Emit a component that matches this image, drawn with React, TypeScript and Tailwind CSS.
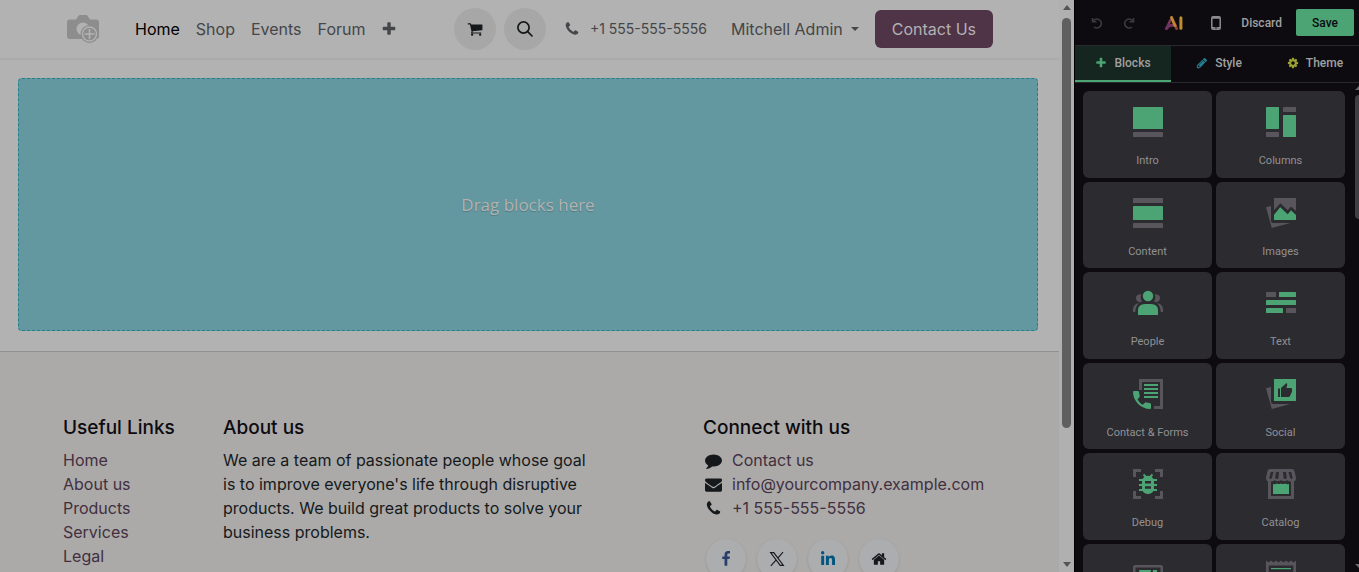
import * as React from "react";
import { FaLinkedinIn } from "react-icons/fa6";

const PATHS = {
  plus: "M1600 736v192q0 40-28 68t-68 28h-416v416q0 40-28 68t-68 28h-192q-40 0-68-28t-28-68v-416h-416q-40 0-68-28t-28-68v-192q0-40 28-68t68-28h416v-416q0-40 28-68t68-28h192q40 0 68 28t28 68v416h416q40 0 68 28t28 68z",
  cart: "M704 1536q0 52-38 90t-90 38-90-38-38-90 38-90 90-38 90 38 38 90zm896 0q0 52-38 90t-90 38-90-38-38-90 38-90 90-38 90 38 38 90zm128-1088v512q0 24-16.5 42.5t-40.5 21.5l-1044 122q13 60 13 70 0 16-24 64h920q26 0 45 19t19 45-19 45-45 19h-1024q-26 0-45-19t-19-45q0-11 8-31.5t16-36 21.5-40 15.5-29.5l-177-823h-204q-26 0-45-19t-19-45 19-45 45-19h256q16 0 28.5 6.5t19.5 15.5 13 24.5 8 26 5.5 29.5 4.5 26h1201q26 0 45 19t19 45z",
  phone: "M1600 1240q0 27-10 70.5t-21 68.5q-21 50-122 106-94 51-186 51-27 0-53-3.5t-57-12.5-47-14.5-55.5-20.5-49.5-18q-98-35-175-83-127-79-264-216t-216-264q-48-77-83-175-3-9-18-49.5t-20.5-55.5-14.5-47-12.5-57-3.5-53q0-92 51-186 56-101 106-122 25-11 68.5-21t70.5-10q14 0 21 3 18 6 53 76 11 19 30 54t35 63.5 31 53.5q3 4 17.5 25t21.5 35.5 7 28.5q0 20-28.5 50t-62 55-62 53-28.5 46q0 9 5 22.5t8.500 20.5 14 24 11.5 19q76 137 174 235t235 174q2 1 19 11.5t24 14 20.5 8.5 22.5 5q18 0 46-28.5t53-62 55-62 50-28.5q14 0 28.5 7t35.5 21.5 25 17.5q25 15 53.5 31t63.5 35 54 30q70 35 76 53 3 7 3 21z",
  comment: "M1792 896q0 174-120 321.5t-326 233-450 85.5q-70 0-145-8-198 175-460 242-49 14-114 22h-5q-15 0-27-10.5t-16-27.5v-1q-3-4-.5-12t2-10 4.5-9.5l6-9 7-8.5 8-9q7-8 31-34.5t34.5-38 31-39.5 32.5-51 27-59 26-76q-157-89-247.5-220t-90.5-281q0-130 71-248.5t191-204.5 286-136.5 348-50.5 348 50.5 286 136.5 191 204.5 71 248.5z",
  envelope: "M1792 710v794q0 66-47 113t-113 47h-1472q-66 0-113-47t-47-113v-794q44 49 101 87 362 246 497 345 57 42 92.5 65.5t94.5 48 110 24.5h2q51 0 110-24.5t94.5-48 92.5-65.5q170-123 498-345 57-39 100-87zm0-294q0 79-49 151t-122 123q-376 261-468 325-10 7-42.5 31t-54 38.5-52 32.5-57.5 27-50 9h-2q-23 0-50-9t-57.5-27-52-32.5-54-38.5-42.5-31q-91-64-262-182.5t-205-142.5q-62-42-117-115.5t-55-136.5q0-78 41.5-130t118.5-52h1472q65 0 112.5 47t47.5 113z",
  facebook: "M1343 12v264h-157q-86 0-116 36t-30 108v189h293l-39 296h-254v759h-306v-759h-255v-296h255v-218q0-186 104-288.5t277-102.5q147 0 228 12z",
  home: "M1472 992v480q0 26-19 45t-45 19h-384v-384h-256v384h-384q-26 0-45-19t-19-45v-480q0-1 .5-3t.5-3l575-474 575 474q1 2 1 6zm223-69l-62 74q-8 9-21 11h-3q-13 0-21-7l-692-577-692 577q-12 8-24 7-13-2-21-11l-62-74q-8-10-7-23.5t11-21.5l719-599q32-26 76-26t76 26l244 204v-195q0-14 9-23t23-9h192q14 0 23 9t9 23v408l219 182q10 8 11 21.5t-7 23.5z",
  pencil: "M491 1536l91-91-235-235-91 91v107h128v128h107zm523-928q0-22-22-22-10 0-17 7l-542 542q-7 7-7 17 0 22 22 22 10 0 17-7l542-542q7-7 7-17zm-54-192l416 416-832 832h-416v-416zm683 96q0 53-37 90l-166 166-416-416 166-165q36-38 90-38 53 0 91 38l235 234q37 39 37 91z",
  cog: "M1152 896q0-106-75-181t-181-75-181 75-75 181 75 181 181 75 181-75 75-181zm512-109v222q0 12-8 23t-20 13l-185 28q-19 54-39 91 35 50 107 138 10 12 10 25t-9 23q-27 37-99 108t-94 71q-12 0-26-9l-138-108q-44 23-91 38-16 136-29 186-7 28-36 28h-222q-14 0-24.5-8.5t-11.5-21.5l-28-184q-49-16-90-37l-141 107q-10 9-25 9-14 0-25-11-126-114-165-168-7-10-7-23 0-12 8-23 15-21 51-66.5t54-70.5q-27-50-41-99l-183-27q-13-2-21-12.5t-8-23.5v-222q0-12 8-23t19-13l186-28q14-46 39-92-40-57-107-138-10-12-10-24 0-10 9-23 26-36 98.5-107.5t94.5-71.5q13 0 26 10l138 107q44-23 91-38 16-136 29-186 7-28 36-28h222q14 0 24.5 8.5t11.5 21.5l28 184q49 16 90 37l142-107q9-9 24-9 13 0 25 10 129 119 165 170 7 8 7 22 0 12-8 23-15 21-51 66.5t-54 70.5q26 50 41 98l183 28q13 2 21 12.5t8 23.5z",
};

function Icon({ name, className }: { name: keyof typeof PATHS; className?: string }) {
  return (
    <svg viewBox="0 0 1792 1792" fill="currentColor" className={className} aria-hidden="true">
      <path d={PATHS[name]} />
    </svg>
  );
}

const GREEN = "#4ca374";
const GRAY = "#58565c";

const navLinks = ["Shop", "Events", "Forum"];
const footerLinks = ["Home", "About us", "Products", "Services", "Legal"];

const blocks: { label?: string; art: React.ReactNode }[] = [
  {
    label: "Intro",
    art: (
      <>
        <rect width="30" height="22" rx="0.5" fill={GREEN} />
        <rect y="25" width="30" height="5" rx="0.5" fill={GRAY} />
      </>
    ),
  },
  {
    label: "Columns",
    art: (
      <>
        <rect width="13" height="22" rx="0.5" fill={GREEN} />
        <rect y="25" width="13" height="5" rx="0.5" fill={GRAY} />
        <rect x="17" width="13" height="5" rx="0.5" fill={GRAY} />
        <rect x="17" y="8" width="13" height="22" rx="0.5" fill={GREEN} />
      </>
    ),
  },
  {
    label: "Content",
    art: (
      <>
        <rect width="30" height="5" rx="0.5" fill={GRAY} />
        <rect y="8" width="30" height="14" rx="0.5" fill={GREEN} />
        <rect y="25" width="30" height="5" rx="0.5" fill={GRAY} />
      </>
    ),
  },
  {
    label: "Images",
    art: (
      <>
        <path fill={GRAY} d="M8 0h22v13l-5-4.6-3.3 3.8-7.3-7L8 12.3z" />
        <path fill={GRAY} d="M0 9.3 5 8v14.5q0 2.5 2.5 2.5h16.8L5.8 30z" />
        <path fill={GREEN} d="m8 16.8 6.2-7.5 7.5 7 3.3-4L30 17v5H8z" />
      </>
    ),
  },
  {
    label: "People",
    art: (
      <>
        <circle cx="15" cy="8" r="5.2" fill={GREEN} />
        <path fill={GREEN} d="M5 27v-4.5q0-6.5 7-6.5h6q7 0 7 6.5V27z" />
        <g fill={GRAY}>
          <path d="M8.500 6Q3 6.500 3 10.300 3 14 8 14.300 9 13.500 8.800 13 6.500 9.500 8.500 6zM0 24v-3q.5-5 6-6-3.500 3.500-3.800 9z" />
          <path d="M21.500 6q5.500.5 5.500 4.300 0 3.700-5 4-1-.8-.8-1.300 2.300-3.500.3-7zM30 24v-3q-.5-5-6-6 3.500 3.500 3.800 9z" />
        </g>
      </>
    ),
  },
  {
    label: "Text",
    art: (
      <>
        <rect y="4" width="10" height="5" rx="0.5" fill={GRAY} />
        <rect x="13" y="4" width="17" height="5" rx="0.5" fill={GREEN} />
        <rect y="12" width="30" height="5" rx="0.5" fill={GREEN} />
        <rect y="20" width="17" height="5" rx="0.5" fill={GREEN} />
        <rect x="20" y="20" width="10" height="5" rx="0.5" fill={GRAY} />
      </>
    ),
  },
  {
    label: "Contact & Forms",
    art: (
      <>
        <path d="M7.500 11V1.500h21v27H21" fill="none" stroke={GRAY} strokeWidth="3" />
        <path fill={GREEN} d="M11 5h14v2H11zM11 9h14v2H11zM11 13h14v2H11zM11 17h14v2H11z" />
        <path fill={GREEN} d="M0 13q0-1 1-1h4l1 .7.8 4.800-2.300 3q2 3.500 5.200 5.200l2.800-2.400 4.800 1 .7.700v4q0 1-1 1C8 30 0 22 0 13z" />
      </>
    ),
  },
  {
    label: "Social",
    art: (
      <>
        <path fill={GRAY} d="M0 9.300 5 8v14.500q0 2.500 2.500 2.500h16.800L5.800 30z" />
        <path
          fill={GREEN}
          fillRule="evenodd"
          d="M8 0h22v22H8zM12 9.500V18h2V9.500zM15 9v9h7.500q1 0 1.500-1l2-4.500V10q0-1-1-1h-4.500l.8-4-.8-1z"
        />
      </>
    ),
  },
  {
    label: "Debug",
    art: (
      <>
        <path d="M1.500 8V1.500H8M22 1.500h6.500V8M28.500 22v6.500H22M8 28.500H1.500V22" fill="none" stroke={GRAY} strokeWidth="3" />
        <path d="m10.500 5.500 3 3M19.500 5.500l-3 3" fill="none" stroke={GREEN} strokeWidth="1.8" />
        <path
          fill={GREEN}
          fillRule="evenodd"
          d="M11.500 7.500q3.500-1.500 7 0L20.500 10H24v2h-3v3h3v2h-3v3h3v2h-3.500q-2 3-5.500 3t-5.500-3H6v-2h3v-3H6v-2h3v-3H6v-2h3.500zM12 12v2.500h6V12zM12 17.300v2.500h6v-2.500z"
        />
      </>
    ),
  },
  {
    label: "Catalog",
    art: (
      <>
        <path
          fill={GRAY}
          fillRule="evenodd"
          d="M4 0h22q1.800 0 2.400 1.800L30 8.500Q30 12 28 12.300V30H2V12.300Q0 12 0 8.500L1.600 1.800Q2.200 0 4 0zM5 12.500V27h20V12.500q-2.500 0-3.500-1.300-3.200 2.300-6.500 0-3.300 2.300-6.500 0Q7.500 12.500 5 12.500zM4.800 3 3.300 9q1 1.800 2.600 0L7.500 3zM10 3l-.8 6q1.600 1.800 3.200 0l.6-6zM17 3l.6 6q1.600 1.800 3.200 0L20 3zM22.500 3l1.600 6q1.600 1.800 2.600 0l-1.500-6z"
        />
        <path fill={GREEN} d="M7 15q2 .6 4-.5 2 1.200 4 0 2 1.200 4 0 2 1.100 4 .5v10H7z" />
      </>
    ),
  },
  {
    art: (
      <>
        <rect x="1.250" y="6.250" width="27.500" height="22" rx="1" fill="none" stroke={GRAY} strokeWidth="2.500" />
        <path fill={GREEN} d="M6 10h12l-1.500 8H8zM20 10h4v8h-5z" />
      </>
    ),
  },
  {
    art: (
      <>
        <path fill={GRAY} fillRule="evenodd" d="m0 .5 2.500 2L5 .5l2.500 2 2.500-2 2.500 2 2.500-2 2.500 2 2.500-2 2.500 2 2.500-2 2.500 2 2.500-2V30H0zM2.700 5.500V28h24.600V5.500z" />
        <path fill={GREEN} d="M5 8h20v1.200H5z" />
      </>
    ),
  },
];

function NavBar() {
  return (
    <header className="flex h-[60px] shrink-0 items-center border-b-2 border-[#aaaaaa] pl-[67px] pr-[66px] text-[#444649]">
      <a href="#" aria-label="Logo">
        <svg viewBox="0 0 33 28" className="h-7 w-[33px]" aria-hidden="true">
          <path fill="#8d8d8d" d="M3 4.500h6L11.500.8q.5-.8 1.500-.8h6q1 0 1.500.8L23 4.500h6q3 0 3 3V21q0 3-3 3H3q-3 0-3-3V7.500q0-3 3-3z" />
          <circle cx="16" cy="14" r="6.500" fill="#b2b2b2" />
          <circle cx="22.500" cy="19" r="9" fill="#8d8d8d" />
          <circle cx="22.500" cy="19" r="7" fill="#8d8d8d" stroke="#b2b2b2" strokeWidth="1.400" />
          <path d="M22.500 14v10M17.500 19h10" stroke="#b2b2b2" strokeWidth="1.600" />
        </svg>
      </a>
      <nav className="ml-[35px] flex items-center gap-4">
        <a href="#" className="text-black">Home</a>
        {navLinks.map((link) => (
          <a key={link} href="#">{link}</a>
        ))}
        <button type="button" aria-label="More">
          <Icon name="plus" className="size-4" />
        </button>
      </nav>
      <div className="ml-auto flex items-center">
        <button type="button" aria-label="Cart" className="flex size-[42px] items-center justify-center rounded-full bg-[#a7a7a7] text-[#15191c]">
          <Icon name="cart" className="size-4" />
        </button>
        <button type="button" aria-label="Search" className="ml-2 flex size-[42px] items-center justify-center rounded-full bg-[#a7a7a7] text-[#15191c]">
          <svg viewBox="0 0 16 16" className="size-4" fill="none" stroke="currentColor" strokeWidth="1.700" strokeLinecap="round" aria-hidden="true">
            <circle cx="6.500" cy="6.500" r="5.600" />
            <path d="m10.700 10.700 4.300 4.300" />
          </svg>
        </button>
        <a href="#" className="ml-[18px] flex items-center gap-2.5 text-sm">
          <Icon name="phone" className="size-4" />
          +1 555-555-5556
        </a>
        <button type="button" className="ml-6 flex items-center gap-2">
          Mitchell Admin
          <svg viewBox="0 0 8 4" className="h-1 w-2" fill="currentColor" aria-hidden="true">
            <path d="M0 0h8L4 4z" />
          </svg>
        </button>
        <a href="#" className="ml-4 rounded-md bg-[#4f3347] px-[17px] py-[7px] text-[#b2b2b2]">
          Contact Us
        </a>
      </div>
    </header>
  );
}

function Footer() {
  const heading = "mb-2 text-[19px]/6 font-medium text-[#0d0b10]";
  const circle = "flex size-10 items-center justify-center rounded-full bg-[#acadaf] shadow-sm";
  return (
    <footer className="grid flex-1 grid-cols-[2fr_5fr_1fr_4fr] border-t border-[#8f9193] bg-[#abaaa8] pb-8 pl-[63px] pr-9 pt-16 text-[#15191c]">
      <div>
        <h5 className={heading}>Useful Links</h5>
        <ul className="text-[#422f40]">
          {footerLinks.map((link) => (
            <li key={link}><a href="#">{link}</a></li>
          ))}
        </ul>
      </div>
      <div className="pr-8">
        <h5 className={heading}>About us</h5>
        <p>
          We are a team of passionate people whose goal is to improve everyone's life through disruptive
          products. We build great products to solve your business problems.
        </p>
      </div>
      <div className="col-start-4">
        <h5 className={heading}>Connect with us</h5>
        <ul>
          <li className="flex items-center gap-2">
            <Icon name="comment" className="mx-0.5 size-[17px]" />
            <a href="#" className="text-[#422f40]">Contact us</a>
          </li>
          <li className="flex items-center gap-2">
            <Icon name="envelope" className="mx-0.5 size-[17px]" />
            <a href="#" className="text-[#422f40]">info@yourcompany.example.com</a>
          </li>
          <li className="flex items-center gap-2">
            <Icon name="phone" className="mx-0.5 size-[17px]" />
            <a href="#" className="text-[#422f40]">+1 555-555-5556</a>
          </li>
        </ul>
        <div className="ml-[3px] mt-[19px] flex gap-[11px]">
          <a href="#" aria-label="Facebook" className={circle}><Icon name="facebook" className="size-4 text-[#293d6b]" /></a>
          <a href="#" aria-label="X" className={circle}>
            <svg viewBox="0 0 16 16" className="size-4" fill="none" stroke="currentColor" strokeWidth="1.100" aria-hidden="true">
              <path d="M1.600 1.600h3.200l9.600 12.800h-3.200zM14 1.200 8.800 7.200M7 9.200l-5.200 5.600" />
            </svg>
          </a>
          <a href="#" aria-label="LinkedIn" className={circle}><FaLinkedinIn className="size-4 text-[#005580]" /></a>
          <a href="#" aria-label="Website" className={circle}><Icon name="home" className="size-4" /></a>
        </div>
      </div>
    </footer>
  );
}

function PageScrollbar() {
  return (
    <div className="flex w-[15px] shrink-0 flex-col items-center bg-[#b0b0b0] py-[5px]" aria-hidden="true">
      <svg viewBox="0 0 8 5" className="h-[5px] w-2" fill="#555555"><path d="M0 5h8L4 0z" /></svg>
      <div className="mt-2 h-[410px] w-[9px] rounded-full bg-[#5f5f5f]" />
      <svg viewBox="0 0 8 5" className="mt-auto h-[5px] w-2" fill="#555555"><path d="M0 0h8L4 5z" /></svg>
    </div>
  );
}

function Sidebar() {
  return (
    <aside className="flex w-[285px] shrink-0 flex-col overflow-hidden border-l border-black bg-[#0d0b10] font-[Roboto,sans-serif] text-xs text-[#a0a0a0]">
      <div className="flex h-[46px] shrink-0 items-center border-b border-[#29282d] pl-4 pr-[5px]">
        <button type="button" aria-label="Undo" className="text-[#3b3a40]">
          <svg viewBox="0 0 12 12" className="size-3" fill="none" stroke="currentColor" strokeWidth="1.600" aria-hidden="true">
            <path d="M1.500 1v3.800h4M1.800 4.500A4.500 4.500 0 1 1 3 10" />
          </svg>
        </button>
        <button type="button" aria-label="Redo" className="ml-5 text-[#3b3a40]">
          <svg viewBox="0 0 12 12" className="size-3" fill="none" stroke="currentColor" strokeWidth="1.600" aria-hidden="true">
            <path d="M10.500 1v3.800h-4M10.200 4.500A4.500 4.500 0 1 0 9 10" />
          </svg>
        </button>
        <button type="button" aria-label="AI" className="ml-[30px]">
          <svg viewBox="0 0 18 14" className="h-3.5 w-[18px]" fill="none" strokeLinecap="round" strokeLinejoin="round" aria-hidden="true">
            <path d="M1.500 12.500 5.500 4" stroke="#7a3855" strokeWidth="2.600" />
            <path d="M1.500 12.500Q4 8.500 9.500 9.500" stroke="#6d3260" strokeWidth="3" />
            <path d="m10 9 1.500 3.500" stroke="#8a4030" strokeWidth="3" />
            <path d="m6.500 1.500 3.500 8" stroke="#bf852f" strokeWidth="3" />
            <path d="M15.900 1.700v10.600" stroke="#bf8f2f" strokeWidth="3" />
          </svg>
        </button>
        <button type="button" aria-label="Mobile preview" className="ml-7">
          <svg viewBox="0 0 10 14" className="h-3.5 w-2.5" fill="none" aria-hidden="true">
            <rect x="0.800" y="0.800" width="8.400" height="12.400" rx="1.200" stroke="#8c8c8e" strokeWidth="1.500" />
            <path d="M1 1.800h8M1 11.800h8" stroke="#8c8c8e" strokeWidth="1.800" />
            <circle cx="5" cy="12" r="0.800" fill="#0d0b10" />
          </svg>
        </button>
        <button type="button" className="ml-auto font-medium">Discard</button>
        <button type="button" className="ml-3.5 h-[27px] w-[58px] rounded-xs bg-[#4ca374] font-medium text-[#0d0b10]">Save</button>
      </div>

      <div className="flex h-[37px] shrink-0 border-b border-[#29282d] font-medium" role="tablist">
        <button type="button" role="tab" aria-selected="true" className="flex w-24 shrink-0 items-center justify-center gap-[7px] border-b-2 border-[#4ca374] bg-[#15251f]">
          <Icon name="plus" className="size-3 text-[#4ca374]" />
          Blocks
        </button>
        <button type="button" role="tab" aria-selected="false" className="flex w-24 shrink-0 items-center justify-center gap-[7px] border-b-2 border-transparent">
          <Icon name="pencil" className="size-3 text-[#237e92]" />
          Style
        </button>
        <button type="button" role="tab" aria-selected="false" className="flex w-24 shrink-0 items-center justify-center gap-[7px] border-b-2 border-transparent">
          <Icon name="cog" className="size-3 text-[#9aa034]" />
          Theme
        </button>
      </div>

      <div className="flex min-h-0 flex-1">
        <div className="grid h-[547px] flex-1 grid-cols-2 grid-rows-6 gap-1 pl-2 pr-2.5 pt-2">
          {blocks.map((block, idx) => (
            <button key={idx} type="button" className="flex flex-col items-center rounded-md bg-[#2c2b30] pt-4">
              <svg viewBox="0 0 30 30" className="size-[30px]" aria-hidden="true">{block.art}</svg>
              {block.label && <span className="mt-4 text-[11px]/4 text-[#919194]">{block.label}</span>}
            </button>
          ))}
        </div>
        <div className="flex w-1 shrink-0 flex-col pb-1 pt-[3px]" aria-hidden="true">
          <svg viewBox="0 0 4 4" className="size-1" fill="#6a696d"><path d="M0 4 4 0v4z" /></svg>
          <div className="mt-[5px] h-[124px] rounded-l-sm bg-[#3f3e43]" />
          <svg viewBox="0 0 4 4" className="mt-auto size-1" fill="#6a696d"><path d="M0 0h4v4z" /></svg>
        </div>
      </div>
    </aside>
  );
}

export default function App() {
  return (
    <div className="flex h-screen overflow-hidden bg-[#b2b2b2] font-[Inter,sans-serif] text-base">
      <div className="flex min-w-0 flex-1 flex-col overflow-hidden">
        <NavBar />
        <main className="pb-5 pl-[18px] pr-[21px] pt-[18px]">
          <div className="flex h-[253px] items-center justify-center rounded-sm border border-dashed border-[#22808c] bg-[#6498a0] font-['Open_Sans',sans-serif] text-[17px] text-[#b2b2b2] text-shadow-xs">
            Drag blocks here
          </div>
        </main>
        <Footer />
      </div>
      <PageScrollbar />
      <Sidebar />
    </div>
  );
}
